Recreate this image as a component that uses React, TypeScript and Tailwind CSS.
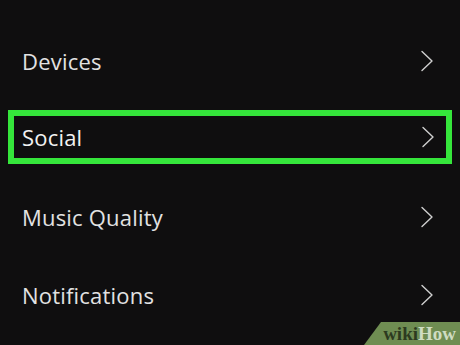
import { useMemo } from 'react';

function Chevron() {
  return (
    <svg width="14" height="22" viewBox="0 0 14 22" fill="none" className="shrink-0">
      <path d="M2 1.5 L12 11 L2 20.5" stroke="#cfcfcf" strokeWidth="1.4" strokeLinecap="round" strokeLinejoin="round" />
    </svg>
  );
}

function Row({ label }: { label: string }) {
  return (
    <div className="h-[78px] flex items-center justify-between pl-[22px] pr-[26px]">
      <span className="text-[22px] text-[#e2e2e2] tracking-[0.2px]">{label}</span>
      <Chevron />
    </div>
  );
}

export default function App() {
  const items = useMemo(() => ['Devices', 'Social', 'Music Quality', 'Notifications'], []);
  return (
    <div
      className="relative w-[460px] h-[345px] overflow-hidden bg-[#0f0e0f] pt-[22px]"
      style={{ fontFamily: '"Open Sans", "Liberation Sans", sans-serif' }}
    >
      <Row label={items[0]} />
      <div className="h-[78px] pt-[10px]">
        <div className="mx-[8px] h-[54px] border-[6px] border-[#35e53b] flex items-center justify-between pl-[8px] pr-[11px]">
          <span className="text-[22px] text-[#f2f2f2] tracking-[0.2px]">{items[1]}</span>
          <Chevron />
        </div>
      </div>
      <Row label={items[2]} />
      <Row label={items[3]} />

      {/* wikiHow badge */}
      <div className="absolute right-0 bottom-0 w-[96px] h-[23px] bg-[#6f8d52] [clip-path:polygon(17px_0,100%_0,100%_100%,0_100%)] flex items-center justify-end pr-[4px]">
        <span
          className="text-[19px] font-bold leading-none"
          style={{ fontFamily: '"Liberation Serif", "DejaVu Serif", serif' }}
        >
          <span className="text-[#2c3a1f]">wiki</span>
          <span className="text-[#cfdcc2]">How</span>
        </span>
      </div>
    </div>
  );
}
